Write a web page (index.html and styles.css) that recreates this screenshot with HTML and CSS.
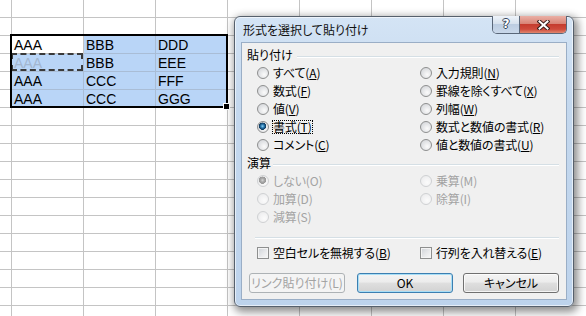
FILE: index.html
```html
<!DOCTYPE html>
<html lang="ja">
<head>
<meta charset="utf-8">
<title>形式を選択して貼り付け</title>
<link rel="stylesheet" href="styles.css">
</head>
<body>
<div class="sheet">
  <div class="data">
    <div class="cell active">AAA</div>
    <div class="cell sel">BBB</div>
    <div class="cell sel">DDD</div>
    <div class="cell sel copied">AAA</div>
    <div class="cell sel">BBB</div>
    <div class="cell sel">EEE</div>
    <div class="cell sel">AAA</div>
    <div class="cell sel">CCC</div>
    <div class="cell sel">FFF</div>
    <div class="cell sel">AAA</div>
    <div class="cell sel">CCC</div>
    <div class="cell sel">GGG</div>
    <div class="selection"><span class="handle"></span></div>
  </div>
</div>

<div class="dialog">
  <div class="titlebar">
    <span class="title">形式を選択して貼り付け</span>
    <div class="caption-buttons">
      <span class="cap-help">?</span>
      <span class="cap-close">
        <svg width="13" height="10" viewBox="0 0 13 10">
          <path d="M2.5 1.5 L10.5 8.5 M10.5 1.5 L2.5 8.5" stroke="#3b1f1c" stroke-width="4" stroke-linecap="square" fill="none"/>
          <path d="M2.5 1.5 L10.5 8.5 M10.5 1.5 L2.5 8.5" stroke="#ffffff" stroke-width="2" stroke-linecap="square" fill="none"/>
        </svg>
      </span>
    </div>
  </div>
  <div class="client">
    <div class="group-head"><span>貼り付け</span><i class="etch"></i></div>
    <div class="options">
      <div class="opt"><span class="radio"></span><span class="lbl">すべて(<u>A</u>)</span></div>
      <div class="opt"><span class="radio"></span><span class="lbl">入力規則(<u>N</u>)</span></div>
      <div class="opt"><span class="radio"></span><span class="lbl">数式(<u>F</u>)</span></div>
      <div class="opt"><span class="radio"></span><span class="lbl">罫線を除くすべて(<u>X</u>)</span></div>
      <div class="opt"><span class="radio"></span><span class="lbl">値(<u>V</u>)</span></div>
      <div class="opt"><span class="radio"></span><span class="lbl">列幅(<u>W</u>)</span></div>
      <div class="opt"><span class="radio on"></span><span class="lbl focus">書式(<u>T</u>)</span></div>
      <div class="opt"><span class="radio"></span><span class="lbl">数式と数値の書式(<u>R</u>)</span></div>
      <div class="opt"><span class="radio"></span><span class="lbl">コメント(<u>C</u>)</span></div>
      <div class="opt"><span class="radio"></span><span class="lbl">値と数値の書式(<u>U</u>)</span></div>
    </div>
    <div class="group-head head2"><span>演算</span><i class="etch"></i></div>
    <div class="options disabled">
      <div class="opt"><span class="radio on"></span><span class="lbl">しない(O)</span></div>
      <div class="opt"><span class="radio"></span><span class="lbl">乗算(M)</span></div>
      <div class="opt"><span class="radio"></span><span class="lbl">加算(D)</span></div>
      <div class="opt"><span class="radio"></span><span class="lbl">除算(I)</span></div>
      <div class="opt"><span class="radio"></span><span class="lbl">減算(S)</span></div>
    </div>
    <div class="sep"></div>
    <div class="options checks">
      <div class="opt"><span class="check"></span><span class="lbl">空白セルを無視する(<u>B</u>)</span></div>
      <div class="opt"><span class="check"></span><span class="lbl">行列を入れ替える(<u>E</u>)</span></div>
    </div>
    <div class="btns">
      <div class="btn disabled">リンク貼り付け(L)</div>
      <div class="btn default ok">OK</div>
      <div class="btn cancel">キャンセル</div>
    </div>
  </div>
</div>
</body>
</html>
```

FILE: styles.css
```css
html, body {
  margin: 0;
  padding: 0;
}
body {
  width: 586px;
  height: 316px;
  overflow: hidden;
  position: relative;
  background: #ffffff;
  font-family: "Liberation Sans", Arial, sans-serif;
}

/* ---------- worksheet ---------- */
.sheet {
  box-sizing: border-box;
  height: 316px;
  padding: 36px 0 0 12px;
  background-color: #ffffff;
  background-image:
    linear-gradient(to right, #c4c4c4 1px, transparent 1px),
    linear-gradient(to bottom, #c4c4c4 1px, transparent 1px);
  background-size: 72px 100%, 100% 18px;
  background-position: 11px 0, 0 17px;
}
.data {
  position: relative;
  width: 216px;
  display: grid;
  grid-template-columns: repeat(3, 72px);
  grid-auto-rows: 18px;
}
.cell {
  position: relative;
  box-sizing: border-box;
  border-right: 1px solid #c4c4c4;
  border-bottom: 1px solid #c4c4c4;
  padding: 1px 0 0 2px;
  font-size: 14px;
  line-height: 16px;
  color: #000;
}
.cell.active {
  background: #ffffff;
}
.cell.sel {
  background: #b9d5f7;
  border-color: #a9bdd6;
}
.cell.copied {
  color: #a3b6cf;
}
.cell.copied::after {
  content: "";
  position: absolute;
  left: -1px;
  top: -1px;
  right: 0;
  bottom: 0;
  border: 2px dashed #3a3a3a;
}
.selection {
  position: absolute;
  left: -2px;
  top: -2px;
  width: 218px;
  height: 74px;
  box-sizing: border-box;
  border: 2px solid #000000;
}
.handle {
  position: absolute;
  right: -4px;
  bottom: -4px;
  width: 5px;
  height: 5px;
  background: #000;
  border: 1px solid #fff;
}

/* ---------- dialog ---------- */
.dialog {
  position: absolute;
  left: 234px;
  top: 16px;
  width: 340px;
  height: 291px;
  box-sizing: border-box;
  border: 1px solid #56606c;
  border-radius: 6px;
  padding: 0 6px 6px;
  display: flex;
  flex-direction: column;
  background: linear-gradient(to bottom, #d4e4f5 0%, #c4d8ee 30%, #bdd3ec 100%);
  box-shadow:
    inset 0 0 0 1px rgba(255, 255, 255, 0.6),
    2px 3px 9px 2px rgba(0, 0, 0, 0.45);
  font-family: "Noto Sans CJK JP", "Liberation Sans", sans-serif;
  font-feature-settings: "palt";
  color: #000;
}
.titlebar {
  height: 25px;
  flex: none;
  display: flex;
  align-items: flex-start;
  justify-content: space-between;
}
.title {
  padding-left: 2px;
  font-size: 12px;
  line-height: 25px;
  color: #111;
}
.caption-buttons {
  display: flex;
  margin-top: -1px;
  border: 1px solid #5a6779;
  border-top: 0;
  border-radius: 0 0 5px 5px;
  overflow: hidden;
}
.cap-help,
.cap-close {
  height: 17px;
  display: flex;
  align-items: center;
  justify-content: center;
}
.cap-help {
  width: 26px;
  border-right: 1px solid #5a6779;
  background: linear-gradient(to bottom, #eef3f9 0%, #d7e2ee 45%, #bccde1 50%, #c9d8ea 100%);
  font-family: "DejaVu Sans", sans-serif;
  font-weight: bold;
  font-size: 12px;
  line-height: 17px;
  color: #ffffff;
  text-shadow: 1px 0 0 #34445a, -1px 0 0 #34445a, 0 1px 0 #34445a, 0 -1px 0 #34445a;
}
.cap-close {
  width: 46px;
  background: linear-gradient(to bottom, #eab0a6 0%, #d98476 45%, #c53c2e 50%, #cf4b3c 78%, #e0876f 100%);
}

.client {
  flex: 1;
  box-sizing: border-box;
  background: #f0f0f0;
  border: 1px solid #9aaec6;
  padding: 3px 7px 0 0;
  display: flex;
  flex-direction: column;
  font-size: 12px;
}
.group-head {
  height: 18px;
  display: flex;
  align-items: center;
  padding-left: 5px;
  line-height: 14px;
}
.etch {
  flex: 1;
  height: 0;
  margin: 3px 0 0 4px;
  border-top: 1px solid #d5dfe5;
  border-bottom: 1px solid #ffffff;
}
.head2 .etch {
  margin-left: 2px;
}
.options {
  display: grid;
  grid-template-columns: 163px 1fr;
  grid-auto-rows: 18px;
  padding-left: 15px;
}
.opt {
  display: flex;
  align-items: center;
  gap: 3px;
}
.lbl {
  border: 1px dotted transparent;
  line-height: 12px;
  white-space: nowrap;
  letter-spacing: -0.15px;
}
.lbl.focus {
  border-color: #000;
}
.radio {
  flex: none;
  width: 12px;
  height: 12px;
  box-sizing: border-box;
  border-radius: 50%;
  border: 1px solid #8e8f8f;
  background: radial-gradient(circle at 62% 65%, #fbfbfb 0%, #e6e7e9 45%, #cdd0d4 100%);
}
.radio.on {
  background:
    radial-gradient(circle at 45% 42%, #8fd0f2 0, #2e7fb6 1.6px, #0e3c62 3.2px, #0e3c62 3.4px, transparent 3.9px),
    radial-gradient(circle at 62% 65%, #fbfbfb 0%, #e6e7e9 45%, #cdd0d4 100%);
}
.disabled .lbl {
  color: #a3a3a3;
}
.disabled .radio {
  border-color: #cfd1d3;
  background: radial-gradient(circle at 62% 65%, #fbfbfb 0%, #f2f2f3 50%, #e6e7e8 100%);
}
.disabled .radio.on {
  background:
    radial-gradient(circle at 45% 42%, #d6d6d6 0, #a9a9a9 1.8px, #979797 3.4px, transparent 3.9px),
    radial-gradient(circle at 62% 65%, #fbfbfb 0%, #f2f2f3 50%, #e6e7e8 100%);
}
.sep {
  margin: 11px 0 0 13px;
  border-top: 1px solid #d5dfe5;
  border-bottom: 1px solid #ffffff;
}
.checks {
  margin-top: 5px;
}
.check {
  flex: none;
  width: 12px;
  height: 12px;
  box-sizing: border-box;
  border: 1px solid #8e8f8f;
  background: linear-gradient(135deg, #ced2d7 0%, #e8e9eb 55%, #f8f8f8 100%);
  box-shadow: inset 0 0 0 1px #f4f4f4;
}
.btns {
  display: flex;
  margin-top: 11px;
  padding-left: 7px;
}
.btn {
  box-sizing: border-box;
  width: 96px;
  height: 20px;
  border: 1px solid #707070;
  border-radius: 3px;
  background: linear-gradient(to bottom, #f4f4f4 0%, #ececec 45%, #dfdfdf 50%, #d2d2d2 100%);
  box-shadow: inset 0 0 0 1px rgba(255, 255, 255, 0.75);
  font-size: 12px;
  line-height: 18px;
  text-align: center;
  color: #000;
}
.btn.disabled {
  border-color: #adb2b5;
  background: #f4f4f4;
  box-shadow: none;
  color: #a3a3a3;
}
.btn.default {
  border-color: #3c7fb1;
  box-shadow: inset 0 0 0 1px #a8def6;
}
.ok {
  margin-left: 12px;
}
.cancel {
  margin-left: 10px;
}
```
